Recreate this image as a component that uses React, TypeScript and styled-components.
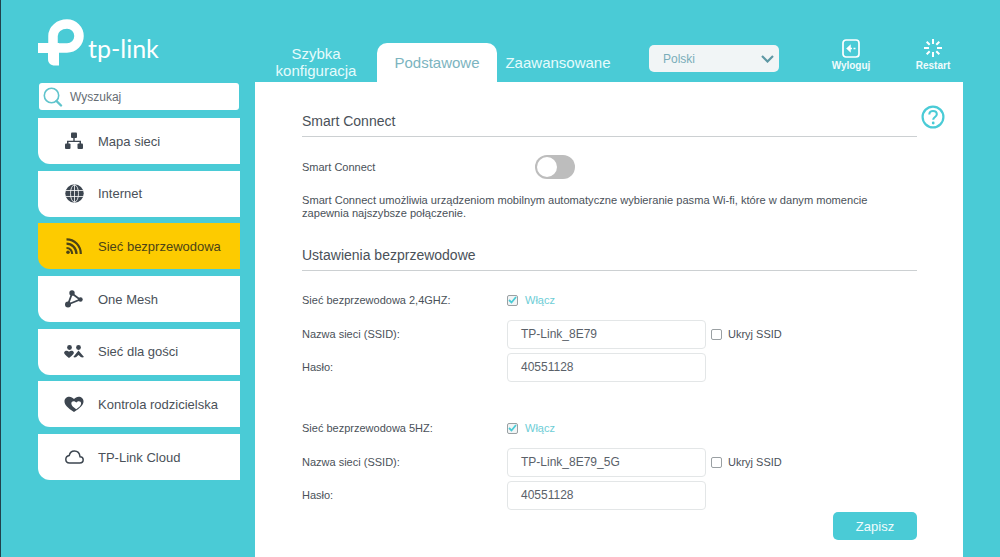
import { ReactNode } from 'react';
import styled, { createGlobalStyle } from 'styled-components';

const TEAL = '#4acbd6';
const INK = '#3d4650';

const GlobalStyle = createGlobalStyle`
    html, body {
        margin: 0;
        padding: 0;
    }

    body {
        background: ${TEAL};
        font-family: 'Liberation Sans', Arial, sans-serif;
    }
`;

const LogoMark = () => (
    <svg width="46" height="47" viewBox="0 0 46 47" fill="none">
        <path d="M15 25V17A14 12 0 0 1 29 5A12 12 0 0 1 29 29H21" stroke="#fff" strokeWidth="9.500" />
        <path d="M0 24H21V46.500H17C12.500 46.500 10 44 10 40V34H0Z" fill="#fff" />
    </svg>
);

const SearchIcon = () => (
    <svg width="20" height="20" viewBox="0 0 20 20" fill="none" stroke="#5fc4cc">
        <circle cx="8.500" cy="8.500" r="7.200" strokeWidth="1.600" />
        <path d="M13.500 14l4.500 4.500" strokeWidth="2.400" strokeLinecap="round" />
    </svg>
);

const NetworkIcon = () => (
    <svg width="18" height="18" viewBox="0 0 18 18" fill={INK}>
        <rect x="6" y="0.500" width="6" height="5.500" rx="1" />
        <path d="M8.300 5.500h1.400v3.200H16V12h-1.500V10.100h-11V12H2V8.700h6.300z" />
        <rect x="0" y="11.500" width="5.500" height="5.500" rx="1" />
        <rect x="12.500" y="11.500" width="5.500" height="5.500" rx="1" />
    </svg>
);

const GlobeIcon = () => (
    <svg width="19" height="19" viewBox="0 0 19 19" fill="none">
        <circle cx="9.500" cy="9.500" r="9.200" fill={INK} />
        <ellipse cx="9.500" cy="9.500" rx="4" ry="8.600" stroke="#fff" strokeWidth="0.800" />
        <path d="M0.500 6.500h18M0.500 12.500h18M9.500 0.500v18" stroke="#fff" strokeWidth="0.800" />
    </svg>
);

const WirelessIcon = () => (
    <svg width="16" height="16" viewBox="0 0 16 16" fill="none" stroke="#4b4317" strokeWidth="2.200">
        <path d="M0.500 1.400C8.500 1.400 14.800 7.600 14.800 16" />
        <path d="M0.500 5.700C6 5.700 10.500 10 10.500 16" />
        <path d="M0.500 10C3.800 10 6.200 12.600 6.200 16" />
        <circle cx="2" cy="14.200" r="1.800" fill="#4b4317" stroke="none" />
    </svg>
);

const MeshIcon = () => (
    <svg width="18" height="18" viewBox="0 0 18 18" fill={INK}>
        <path d="M7 3.500L3 14.500L15 9.500Z" fill="none" stroke={INK} strokeWidth="1.800" />
        <circle cx="7" cy="3" r="2.700" />
        <circle cx="3" cy="14.500" r="3" />
        <circle cx="15.500" cy="9.500" r="2.200" />
    </svg>
);

const GuestIcon = () => (
    <svg width="20" height="14" viewBox="0 0 20 14" fill={INK}>
        <circle cx="5.500" cy="2.500" r="2.400" />
        <circle cx="14.500" cy="2.500" r="2.400" />
        <path d="M0.300 7C1.300 5.400 3.800 5.500 5 6.800 6.300 5.500 8.800 5.400 9.700 7 10.300 8.400 9.100 9.700 5 13 .9 9.700-.3 8.400.3 7z" />
        <path d="M14.500 5.500L20 12C18.300 12.900 16.500 12.300 15.700 11.100L14.500 9.900 13.300 11.100C12.500 12.300 10.800 12.900 9.300 12z" />
    </svg>
);

const ParentalIcon = () => (
    <svg width="20" height="16" viewBox="0 0 22 18">
        <path
            d="M11 18C4 13.500.3 10.500.3 6 .3 2.800 2.800.8 5.700.8 7.800.8 9.800 1.800 11 3.500 12.200 1.800 14.200.8 16.300.8 19.200.8 21.700 2.800 21.700 6 21.700 10.500 18 13.500 11 18Z"
            fill={INK}
        />
        <path
            d="M13.500 15C10.400 12.800 8 11 8 8.500 8 7 9.200 6 10.500 6 11.800 6 12.900 6.600 13.500 7.600 14.100 6.600 15.200 6 16.500 6 17.800 6 19 7 19 8.500 19 11 16.600 12.800 13.500 15Z"
            fill="#fff"
        />
    </svg>
);

const CloudIcon = () => (
    <svg width="19" height="14" viewBox="0 0 19 14" fill="none" stroke={INK} strokeWidth="1.500">
        <path d="M4.500 13H14.800C16.800 13 18.200 11.600 18.200 9.800 18.200 8 16.800 6.700 15 6.700 14.600 3.300 12.300 1 9.400 1 6.800 1 4.800 2.800 4.300 5.400 2.300 5.800.8 7.300.8 9.300.8 11.500 2.400 13 4.500 13Z" />
    </svg>
);

const LogoutIcon = () => (
    <svg width="18" height="19" viewBox="0 0 18 19" fill="none" stroke="#fff">
        <rect x="1" y="1" width="16" height="17" rx="3" strokeWidth="1.700" />
        <path d="M4.500 9.500L8.500 5.800V13.200Z" fill="#fff" strokeWidth="0.500" />
        <path d="M8 9.500h2M11.500 9.500h2" strokeWidth="1.700" />
    </svg>
);

const RestartIcon = () => (
    <svg width="20" height="20" viewBox="0 0 20 20" stroke="#fff" strokeWidth="2">
        <path d="M10 1v5M10 14v5M1 10h5M14 10h5M3.700 3.700l3 3M13.300 13.300l3 3M16.300 3.700l-3 3M6.700 13.300l-3 3" />
    </svg>
);

const HelpIcon = () => (
    <svg width="24" height="24" viewBox="0 0 24 24" fill="none" stroke={TEAL}>
        <circle cx="12" cy="12" r="10.400" strokeWidth="2.200" />
        <path d="M8.300 9.500C8.300 7.200 10 6 12 6c2.200 0 3.800 1.300 3.800 3.200 0 2.800-3.600 2.800-3.600 5.600" strokeWidth="2.100" />
        <circle cx="12.200" cy="18" r="1.400" fill={TEAL} stroke="none" />
    </svg>
);

const MENU: { label: string; icon: ReactNode; active?: boolean }[] = [
    { label: 'Mapa sieci', icon: <NetworkIcon /> },
    { label: 'Internet', icon: <GlobeIcon /> },
    { label: 'Sieć bezprzewodowa', icon: <WirelessIcon />, active: true },
    { label: 'One Mesh', icon: <MeshIcon /> },
    { label: 'Sieć dla gości', icon: <GuestIcon /> },
    { label: 'Kontrola rodzicielska', icon: <ParentalIcon /> },
    { label: 'TP-Link Cloud', icon: <CloudIcon /> },
];

const BANDS = [
    { title: 'Sieć bezprzewodowa 2,4GHZ:', ssid: 'TP-Link_8E79', password: '40551128' },
    { title: 'Sieć bezprzewodowa 5HZ:', ssid: 'TP-Link_8E79_5G', password: '40551128' },
];

export default function App() {
    return (
        <Page>
            <GlobalStyle />
            <Sidebar>
                <Logo>
                    <LogoMark />
                    <LogoText>tp-link</LogoText>
                </Logo>
                <SearchBox>
                    <SearchIcon />
                    <span>Wyszukaj</span>
                </SearchBox>
                <Menu>
                    {MENU.map((item) => (
                        <MenuItem key={item.label} $active={item.active}>
                            <MenuIcon>{item.icon}</MenuIcon>
                            {item.label}
                        </MenuItem>
                    ))}
                </Menu>
            </Sidebar>
            <Content>
                <TopBar>
                    <QuickTab>
                        Szybka
                        <br />
                        konfiguracja
                    </QuickTab>
                    <ActiveTab>Podstawowe</ActiveTab>
                    <AdvancedTab>Zaawansowane</AdvancedTab>
                    <LanguageSelect>
                        Polski
                        <svg width="13" height="8" viewBox="0 0 13 8" fill="none" stroke="#5d98a4" strokeWidth="2.200">
                            <path d="M1 1l5.500 5.500L12 1" />
                        </svg>
                    </LanguageSelect>
                    <TopAction $gap={42}>
                        <LogoutIcon />
                        Wyloguj
                    </TopAction>
                    <TopAction $gap={22}>
                        <RestartIcon />
                        Restart
                    </TopAction>
                </TopBar>
                <Panel>
                    <HelpButton>
                        <HelpIcon />
                    </HelpButton>
                    <SectionTitle>Smart Connect</SectionTitle>
                    <ToggleRow>
                        <ToggleLabel>Smart Connect</ToggleLabel>
                        <Toggle />
                    </ToggleRow>
                    <Description>
                        Smart Connect umożliwia urządzeniom mobilnym automatyczne wybieranie pasma Wi-fi, które w danym
                        momencie
                        <br />
                        zapewnia najszybsze połączenie.
                    </Description>
                    <SectionTitle>Ustawienia bezprzewodowe</SectionTitle>
                    {BANDS.map((band) => (
                        <Band key={band.ssid}>
                            <EnableRow>
                                <FieldLabel>{band.title}</FieldLabel>
                                <CheckBox $checked>
                                    <svg width="9" height="8" viewBox="0 0 9 8" fill="none" stroke={TEAL} strokeWidth="1.800">
                                        <path d="M1 4l2.500 2.500L8 1" />
                                    </svg>
                                </CheckBox>
                                <EnableText>Włącz</EnableText>
                            </EnableRow>
                            <FieldRow>
                                <FieldLabel>Nazwa sieci (SSID):</FieldLabel>
                                <TextField>{band.ssid}</TextField>
                                <CheckBox />
                                <HideText>Ukryj SSID</HideText>
                            </FieldRow>
                            <PasswordRow>
                                <FieldLabel>Hasło:</FieldLabel>
                                <TextField>{band.password}</TextField>
                            </PasswordRow>
                        </Band>
                    ))}
                    <SaveRow>
                        <SaveButton>Zapisz</SaveButton>
                    </SaveRow>
                </Panel>
            </Content>
        </Page>
    );
}

const Page = styled.div`
    display: flex;
    width: 1000px;
    height: 557px;
    overflow: hidden;
    box-sizing: border-box;
    padding-left: 37px;
    background: ${TEAL};
    border-left: 1px solid #20424c;
`;

const Sidebar = styled.aside`
    width: 202px;
    margin-right: 15px;
    flex-shrink: 0;
`;

const Logo = styled.div`
    display: flex;
    align-items: flex-end;
    height: 66px;
    margin-bottom: 17px;
`;

const LogoText = styled.span`
    margin: 0 0 3px 4px;
    font-family: Lato, 'Open Sans', sans-serif;
    font-size: 25px;
    font-weight: 400;
    line-height: 30px;
    color: #fff;
`;

const SearchBox = styled.div`
    display: flex;
    align-items: center;
    gap: 7px;
    box-sizing: border-box;
    width: 200px;
    height: 27px;
    margin: 0 0 8px 1px;
    padding-left: 4px;
    background: #fff;
    border-radius: 3px;
    font-size: 12px;
    color: #666d74;
`;

const Menu = styled.nav`
    display: flex;
    flex-direction: column;
    gap: 6.700px;
`;

const MenuItem = styled.div<{ $active?: boolean }>`
    display: flex;
    align-items: center;
    box-sizing: border-box;
    height: 46px;
    background: ${({ $active }) => ($active ? '#fdcb00' : '#fff')};
    border-bottom-left-radius: 12px;
    font-size: 13px;
    color: ${({ $active }) => ($active ? '#4b4317' : '#4a5159')};
`;

const MenuIcon = styled.span`
    display: flex;
    justify-content: center;
    width: 24px;
    margin: 0 12px 0 24px;
`;

const Content = styled.div`
    display: flex;
    flex-direction: column;
    width: 708px;
`;

const TopBar = styled.header`
    display: flex;
    align-items: flex-end;
    height: 82px;
    flex-shrink: 0;
`;

const Tab = styled.div`
    flex-shrink: 0;
    font-size: 15px;
    color: #e6fbfc;
    text-align: center;
`;

const QuickTab = styled(Tab)`
    width: 122px;
    line-height: 17px;
    padding-bottom: 3px;
`;

const ActiveTab = styled(Tab)`
    width: 120px;
    height: 39px;
    line-height: 39px;
    background: #fff;
    border-radius: 10px 10px 0 0;
    color: #7cb4c0;
`;

const AdvancedTab = styled(Tab)`
    width: 122px;
    height: 39px;
    line-height: 39px;
`;

const LanguageSelect = styled.div`
    display: flex;
    align-items: center;
    justify-content: space-between;
    flex-shrink: 0;
    box-sizing: border-box;
    width: 130px;
    height: 27px;
    margin: 0 0 10px 30px;
    padding: 0 5px 0 14px;
    background: #f1f5f6;
    border-radius: 5px;
    font-size: 12px;
    color: #79adb9;
`;

const TopAction = styled.div<{ $gap: number }>`
    display: flex;
    flex-direction: column;
    align-items: center;
    flex-shrink: 0;
    gap: 2px;
    width: 60px;
    margin: 0 0 11px ${({ $gap }) => $gap}px;
    font-size: 10px;
    font-weight: 700;
    color: #f1fbfc;
`;

const Panel = styled.main`
    position: relative;
    flex: 1;
    padding: 30px 46px 0 47px;
    background: #fff;
`;

const HelpButton = styled.span`
    position: absolute;
    top: 23px;
    right: 18px;
    display: flex;
`;

const SectionTitle = styled.h2`
    margin: 0;
    height: 24px;
    border-bottom: 1px solid #ccd0d2;
    font-size: 14px;
    font-weight: 400;
    line-height: 18px;
    color: #4a5159;
`;

const ToggleRow = styled.div`
    display: flex;
    align-items: center;
    height: 24px;
    margin: 18px 0 15px;
`;

const ToggleLabel = styled.span`
    width: 233px;
    font-size: 11px;
    color: #4a5159;
`;

const Toggle = styled.span`
    position: relative;
    width: 40px;
    height: 24px;
    background: #bdbdbd;
    border-radius: 12px;

    &::after {
        content: '';
        position: absolute;
        top: 2px;
        left: 2px;
        width: 20px;
        height: 20px;
        background: #fff;
        border-radius: 50%;
    }
`;

const Description = styled.p`
    margin: 0 0 26px;
    font-size: 11.100px;
    line-height: 13px;
    color: #4a5159;
`;

const Band = styled.section`
    margin-top: 19px;

    & + & {
        margin-top: 36px;
    }
`;

const EnableRow = styled.div`
    display: flex;
    align-items: center;
    height: 20px;
    margin-bottom: 9px;
`;

const FieldRow = styled.div`
    display: flex;
    align-items: center;
    height: 30px;
    margin-bottom: 3px;
`;

const PasswordRow = styled(FieldRow)`
    margin-bottom: 0;
`;

const FieldLabel = styled.span`
    width: 205px;
    flex-shrink: 0;
    font-size: 11px;
    color: #4a5159;
`;

const CheckBox = styled.span<{ $checked?: boolean }>`
    display: flex;
    align-items: center;
    justify-content: center;
    box-sizing: border-box;
    width: 11px;
    height: 11px;
    border: 1px solid #9aa0a3;
    border-radius: 2px;
    background: ${({ $checked }) => ($checked ? '#f2f5f6' : '#fff')};
`;

const EnableText = styled.span`
    margin-left: 7px;
    font-size: 11px;
    color: #6dcdd6;
`;

const HideText = styled.span`
    margin-left: 6px;
    font-size: 11px;
    color: #4a5159;
`;

const TextField = styled.div`
    display: flex;
    align-items: center;
    box-sizing: border-box;
    width: 199px;
    height: 29px;
    margin-right: 5px;
    padding-left: 13px;
    border: 1px solid #e3e6e7;
    border-radius: 4px;
    font-size: 12px;
    color: #5a6169;
`;

const SaveRow = styled.div`
    display: flex;
    justify-content: flex-end;
    margin-top: 2px;
`;

const SaveButton = styled.button`
    width: 84px;
    height: 28px;
    padding: 0;
    border: none;
    border-radius: 5px;
    background: ${TEAL};
    font-family: inherit;
    font-size: 13px;
    color: #effcfd;
`;
